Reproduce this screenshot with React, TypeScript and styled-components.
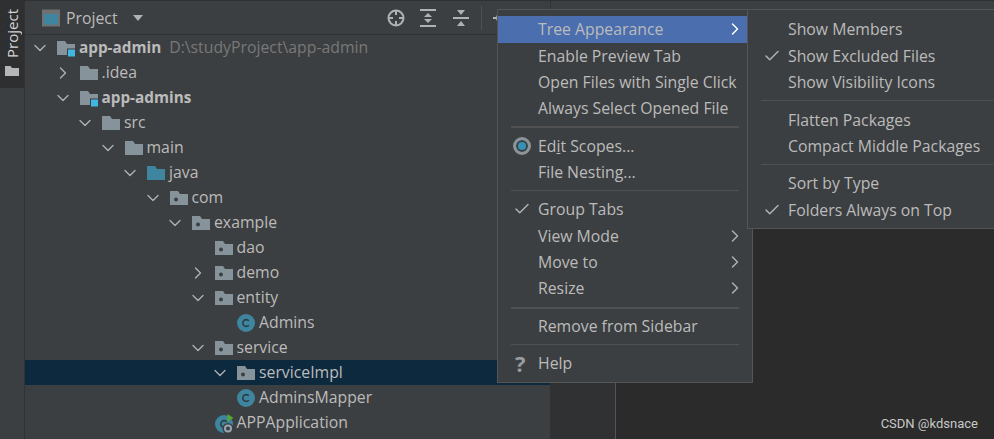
import React from 'react';
import styled, { createGlobalStyle } from 'styled-components';
import { ChevronDown, ChevronRight, Check } from 'lucide-react';

const GlobalStyle = createGlobalStyle`
  html, body {
    margin: 0;
    padding: 0;
    background: #2b2b2b;
  }
`;

const StyledPage = styled.div`
  position: relative;
  display: flex;
  width: 994px;
  height: 439px;
  overflow: hidden;
  border-top: 1px solid #2f3132;
  box-sizing: border-box;
  font-family: 'Open Sans', 'Noto Sans', sans-serif;
  font-size: 15.8px;
  color: #bbbbbb;
`;

const StyledRail = styled.div`
  flex: 0 0 24px;
  background: #3c3f41;
  border-right: 1px solid #323232;
`;

const StyledRailTab = styled.div`
  display: flex;
  flex-direction: column;
  align-items: center;
  gap: 8px;
  height: 87px;
  padding-top: 8px;
  box-sizing: border-box;
  background: #2d2f30;
`;

const StyledRailLabel = styled.span`
  writing-mode: vertical-rl;
  transform: rotate(180deg);
  font-size: 15px;
  line-height: 16px;
  color: #d4d4d4;
`;

const StyledPanel = styled.div`
  display: flex;
  flex-direction: column;
  flex: 0 0 525px;
  background: #3c3f41;
`;

const StyledHeader = styled.div`
  display: flex;
  align-items: center;
  flex: 0 0 33px;
  padding-left: 17px;
  border-bottom: 1px solid #323232;
`;

const StyledHeaderTitle = styled.span`
  margin-left: 6px;
`;

const StyledTriangle = styled.span`
  margin-left: 15px;
  width: 0;
  height: 0;
  border-left: 5.5px solid transparent;
  border-right: 5.5px solid transparent;
  border-top: 6px solid #afb1b3;
`;

const StyledToolbar = styled.div`
  display: flex;
  align-items: center;
  gap: 15px;
  margin-left: auto;
  padding-right: 41px;
`;

const StyledToolDivider = styled.div`
  width: 1px;
  height: 24px;
  margin: 0 -4px 0 -5px;
  background: #515151;
`;

const StyledTree = styled.div`
  display: flex;
  flex-direction: column;
`;

const StyledRow = styled.div<{ $depth: number; $selected?: boolean }>`
  display: flex;
  align-items: center;
  flex: 0 0 25px;
  padding-left: ${({ $depth }) => 8 + $depth * 22.5}px;
  background: ${({ $selected }) => ($selected ? '#0d293e' : 'transparent')};
  white-space: nowrap;
`;

const StyledChevronSlot = styled.span`
  display: flex;
  align-items: center;
  flex: 0 0 24px;
  margin-left: -3px;
  padding-right: 3px;
  box-sizing: content-box;
  width: 24px;
  color: #afb1b3;
`;

const StyledNodeIcon = styled.span`
  display: flex;
  flex: 0 0 18px;
  margin-right: 4px;
`;

const StyledName = styled.span<{ $bold?: boolean }>`
  margin-bottom: 2px;
  font-size: ${({ $bold }) => ($bold ? 15.3 : 15.8)}px;
  font-weight: ${({ $bold }) => ($bold ? 700 : 400)};
`;

const StyledPath = styled.span`
  margin: 0 0 2px 8px;
  color: #787878;
`;

const StyledWorkspace = styled.div`
  display: flex;
  flex-direction: column;
  flex: 1;
`;

const StyledTabBar = styled.div`
  flex: 0 0 33px;
  background: #3c3f41;
  border-left: 1px solid #323232;
`;

const StyledWorkspaceBody = styled.div`
  display: flex;
  flex: 1;
`;

const StyledGutter = styled.div`
  flex: 0 0 65px;
  background: #303132;
  border-right: 1px solid #555555;
`;

const StyledEditor = styled.div`
  flex: 1;
  background: #2b2b2b;
`;

const StyledMenu = styled.div<{ $left: number; $width: number }>`
  position: absolute;
  top: 8px;
  left: ${({ $left }) => $left}px;
  width: ${({ $width }) => $width}px;
  padding: 6.25px 0 5.5px;
  box-sizing: border-box;
  background: #3c3f41;
  border: 1px solid #555555;
`;

const StyledItem = styled.div<{ $active?: boolean }>`
  display: flex;
  align-items: center;
  height: 26.3px;
  padding-left: 11px;
  padding-right: 7px;
  background: ${({ $active }) => ($active ? '#4b6eaf' : 'transparent')};
  white-space: nowrap;
`;

const StyledItemIcon = styled.span`
  display: flex;
  align-items: center;
  flex: 0 0 29px;
`;

const StyledCheck = styled(Check)`
  margin-left: 4px;
  color: #afb1b3;
`;

const StyledArrow = styled.span<{ $active?: boolean }>`
  display: flex;
  margin-left: auto;
  color: ${({ $active }) => ($active ? '#ffffff' : '#afb1b3')};
`;

const StyledSeparator = styled.div<{ $thick?: boolean }>`
  height: ${({ $thick }) => ($thick ? 2 : 1)}px;
  margin: ${({ $thick }) => ($thick ? '5px 13px 4px' : '5.3px 13px 5px')};
  background: #515151;
`;

const StyledRadio = styled.span`
  width: 12px;
  height: 12px;
  margin-left: 4px;
  border: 3px solid #8c9499;
  border-radius: 50%;
  background: #3592b5;
  box-shadow: inset 0 0 0 2px #3c3f41;
`;

const StyledHelp = styled.span`
  margin-left: 6px;
  font-weight: 700;
  font-size: 22px;
  line-height: 22px;
  color: #9a9da0;
`;

const StyledWatermark = styled.span`
  position: absolute;
  right: 16px;
  bottom: 8px;
  font-family: Roboto, sans-serif;
  font-size: 13px;
  color: #c8c8c8;
`;

const FolderIcon = ({ fill = '#87939a', dot, badge }: { fill?: string; dot?: boolean; badge?: boolean }) => (
  <svg width="18" height="18" viewBox="0 0 18 18">
    <path d="M0 2h8l2 3h8v11H0z" fill={fill} />
    {dot && <circle cx="6" cy="10.5" r="2" fill="#3c3f41" />}
    {badge && <rect x="10.5" y="10" width="8" height="8" fill="#40b6e0" stroke="#3c3f41" strokeWidth="1" />}
  </svg>
);

const ClassIcon = () => (
  <svg width="18" height="18" viewBox="0 0 18 18">
    <circle cx="9" cy="9" r="9" fill="#3e86a0" />
    <path d="M11.8 6.8a3.4 3.4 0 1 0 0 4.4" fill="none" stroke="#2f3b41" strokeWidth="1.6" />
  </svg>
);

const AppIcon = () => (
  <svg width="18" height="18" viewBox="0 0 18 18" overflow="visible">
    <circle cx="9" cy="10" r="9" fill="#3e86a0" />
    <path d="M11.8 7.8a3.4 3.4 0 1 0 0 4.4" fill="none" stroke="#2f3b41" strokeWidth="1.6" />
    <path d="M12.5 0v7.5L18.5 4z" fill="#59a82e" />
    <circle cx="13" cy="14.5" r="5.5" fill="#3c3f41" />
    <circle cx="13" cy="14.5" r="3" fill="none" stroke="#9aa7b0" strokeWidth="2" />
  </svg>
);

const ProjectIcon = () => (
  <svg width="18" height="18" viewBox="0 0 18 18">
    <rect x="0" y="0.5" width="18" height="17" fill="#6e7072" />
    <rect x="2" y="5" width="14" height="10.5" fill="#3e86a0" />
  </svg>
);

const TargetIcon = () => (
  <svg width="18" height="18" viewBox="0 0 18 18" fill="none" stroke="#afb1b3" strokeWidth="2">
    <circle cx="9" cy="9" r="7.5" />
    <path d="M9 1v5M9 12v5M1 9h5M12 9h5" />
  </svg>
);

const ExpandIcon = () => (
  <svg width="18" height="18" viewBox="0 0 18 18" fill="#afb1b3">
    <rect x="0" y="0" width="16" height="2" />
    <rect x="0" y="16" width="16" height="2" />
    <path d="M8 4l4 4H4zM8 14l4-4H4z" />
  </svg>
);

const CollapseIcon = () => (
  <svg width="18" height="18" viewBox="0 0 18 18" fill="#afb1b3">
    <rect x="0" y="8" width="16" height="2" />
    <path d="M8 6L4 1h8zM8 12l4 5H4z" />
  </svg>
);

const GearIcon = () => (
  <svg width="16" height="16" viewBox="0 0 16 16" fill="none" stroke="#afb1b3" strokeWidth="2">
    <circle cx="8" cy="8" r="4" />
    <path d="M8 0v3M8 13v3M0 8h3M13 8h3" />
  </svg>
);

const RailFolder = () => (
  <svg width="14" height="10" viewBox="0 0 14 10">
    <path d="M0 0h5.5l1.5 2h7v8H0z" fill="#b4b6b8" />
  </svg>
);

type NodeKind = 'module' | 'folder' | 'source' | 'package' | 'class' | 'app';

interface INode {
  name: string;
  depth: number;
  kind: NodeKind;
  open?: boolean;
  bold?: boolean;
  path?: string;
  selected?: boolean;
}

const nodes: INode[] = [
  { name: 'app-admin', depth: 0, kind: 'module', open: true, bold: true, path: 'D:\\studyProject\\app-admin' },
  { name: '.idea', depth: 1, kind: 'folder', open: false },
  { name: 'app-admins', depth: 1, kind: 'module', open: true, bold: true },
  { name: 'src', depth: 2, kind: 'folder', open: true },
  { name: 'main', depth: 3, kind: 'folder', open: true },
  { name: 'java', depth: 4, kind: 'source', open: true },
  { name: 'com', depth: 5, kind: 'package', open: true },
  { name: 'example', depth: 6, kind: 'package', open: true },
  { name: 'dao', depth: 7, kind: 'package' },
  { name: 'demo', depth: 7, kind: 'package', open: false },
  { name: 'entity', depth: 7, kind: 'package', open: true },
  { name: 'Admins', depth: 8, kind: 'class' },
  { name: 'service', depth: 7, kind: 'package', open: true },
  { name: 'serviceImpl', depth: 8, kind: 'package', open: true, selected: true },
  { name: 'AdminsMapper', depth: 8, kind: 'class' },
  { name: 'APPApplication', depth: 7, kind: 'app' },
];

const renderNodeIcon = (kind: NodeKind) => {
  switch (kind) {
    case 'module':
      return <FolderIcon badge />;
    case 'source':
      return <FolderIcon fill="#3e86a0" />;
    case 'package':
      return <FolderIcon dot />;
    case 'class':
      return <ClassIcon />;
    case 'app':
      return <AppIcon />;
    default:
      return <FolderIcon />;
  }
};

type MenuEntry =
  | { sep: true; thick?: boolean }
  | { label: React.ReactNode; sep?: false; icon?: 'check' | 'radio' | 'help'; sub?: boolean; active?: boolean };

const mainMenu: MenuEntry[] = [
  { label: 'Tree Appearance', sub: true, active: true },
  { label: 'Enable Preview Tab' },
  { label: 'Open Files with Single Click' },
  { label: 'Always Select Opened File' },
  { sep: true, thick: true },
  { label: <span>Ed<u>i</u>t Scopes...</span>, icon: 'radio' },
  { label: 'File Nesting...' },
  { sep: true },
  { label: 'Group Tabs', icon: 'check' },
  { label: 'View Mode', sub: true },
  { label: 'Move to', sub: true },
  { label: 'Resize', sub: true },
  { sep: true, thick: true },
  { label: 'Remove from Sidebar' },
  { sep: true },
  { label: 'Help', icon: 'help' },
];

const subMenu: MenuEntry[] = [
  { label: 'Show Members' },
  { label: 'Show Excluded Files', icon: 'check' },
  { label: 'Show Visibility Icons' },
  { sep: true },
  { label: 'Flatten Packages' },
  { label: 'Compact Middle Packages' },
  { sep: true },
  { label: 'Sort by Type' },
  { label: 'Folders Always on Top', icon: 'check' },
];

const MenuList = ({ items, left, width }: { items: MenuEntry[]; left: number; width: number }) => (
  <StyledMenu $left={left} $width={width}>
    {items.map((item, i) =>
      item.sep ? (
        <StyledSeparator key={i} $thick={item.thick} />
      ) : (
        <StyledItem key={i} $active={item.active}>
          <StyledItemIcon>
            {item.icon === 'check' && <StyledCheck size={18} strokeWidth={2} />}
            {item.icon === 'radio' && <StyledRadio />}
            {item.icon === 'help' && <StyledHelp>?</StyledHelp>}
          </StyledItemIcon>
          {item.label}
          {item.sub && (
            <StyledArrow $active={item.active}>
              <ChevronRight size={20} strokeWidth={1.7} />
            </StyledArrow>
          )}
        </StyledItem>
      )
    )}
  </StyledMenu>
);

export default function App() {
  return (
    <>
      <GlobalStyle />
      <StyledPage>
        <StyledRail>
          <StyledRailTab>
            <StyledRailLabel>Project</StyledRailLabel>
            <RailFolder />
          </StyledRailTab>
        </StyledRail>
        <StyledPanel>
          <StyledHeader>
            <ProjectIcon />
            <StyledHeaderTitle>Project</StyledHeaderTitle>
            <StyledTriangle />
            <StyledToolbar>
              <TargetIcon />
              <ExpandIcon />
              <CollapseIcon />
              <StyledToolDivider />
              <GearIcon />
            </StyledToolbar>
          </StyledHeader>
          <StyledTree>
            {nodes.map((node) => (
              <StyledRow key={node.name} $depth={node.depth} $selected={node.selected}>
                <StyledChevronSlot>
                  {node.open === true && <ChevronDown size={20} strokeWidth={1.6} />}
                  {node.open === false && <ChevronRight size={20} strokeWidth={1.6} />}
                </StyledChevronSlot>
                <StyledNodeIcon>{renderNodeIcon(node.kind)}</StyledNodeIcon>
                <StyledName $bold={node.bold}>{node.name}</StyledName>
                {node.path && <StyledPath>{node.path}</StyledPath>}
              </StyledRow>
            ))}
          </StyledTree>
        </StyledPanel>
        <StyledWorkspace>
          <StyledTabBar />
          <StyledWorkspaceBody>
            <StyledGutter />
            <StyledEditor />
          </StyledWorkspaceBody>
        </StyledWorkspace>
        <MenuList items={mainMenu} left={497} width={256} />
        <MenuList items={subMenu} left={747} width={260} />
        <StyledWatermark>CSDN @kdsnace</StyledWatermark>
      </StyledPage>
    </>
  );
}
